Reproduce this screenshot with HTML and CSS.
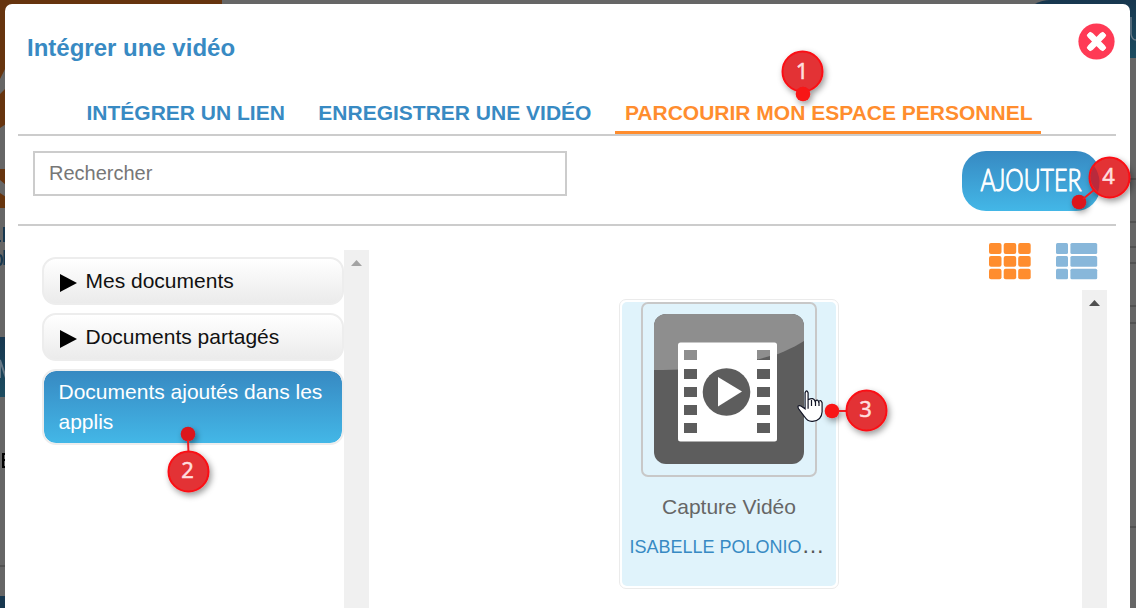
FILE: index.html
```html
<!DOCTYPE html>
<html lang="fr">
<head>
<meta charset="utf-8">
<title>Intégrer une vidéo</title>
<link rel="stylesheet" href="styles.css">
</head>
<body>
<svg class="backdrop" width="1136" height="608" aria-hidden="true">
  <defs><linearGradient id="dim" x1="0" y1="0" x2="0" y2="1"><stop offset="0" stop-color="#17374f"/><stop offset="1" stop-color="#1c4c60"/></linearGradient></defs>
  <rect width="222" height="208" fill="#66340e"/>
  <path d="M0 79L6 67V88L0 94Z M0 128L6 124V169H0Z M0 180L6 185V197L0 193Z" fill="#666"/>
  <path d="M1035 4 Q1042 0 1050 0 H1136 V58 H1120Z" fill="url(#dim)"/>
  <path d="M1131 17 V34 Q1132 40 1136 40" stroke="#667886" stroke-width="1.5" fill="none"/>
  <path d="M1130 179H1136M1130 222H1136M1130 247H1136M1130 263H1136M1130 306H1136M1130 323H1136M1130 527H1136M0 566H5" stroke="#525252" stroke-width="2"/>
  <rect y="337" width="5" height="60" fill="url(#dim)"/>
  <path d="M0 378V360L6 378" stroke="#667886" stroke-width="2" fill="none"/>
  <rect y="596" width="5" height="12" fill="#17374f"/>
  <path d="M0 241H1M4 227V242M0 255Q2 256 2 260T0 265M4.500 250V265" stroke="#17374f" stroke-width="2" fill="none"/>
  <path d="M3 453V468M2 454H5M2 460H5M2 467H5" stroke="#000" stroke-width="2" fill="none"/>
</svg>
<main class="modal">
  <header class="head">
    <h1 class="title">Intégrer une vidéo</h1>
    <svg class="close" width="37" height="37" viewBox="0 0 37 37"><circle cx="18.5" cy="18.5" r="18.1" fill="#ff3a55"/><path d="M12.600 12.600L24.400 24.400M24.400 12.600L12.600 24.400" stroke="#fff" stroke-width="6.400" stroke-linecap="round"/><path d="M12.200 12.200L24.800 24.800M24.800 12.200L12.200 24.800" stroke="#fff" stroke-width="5" stroke-linecap="square"/></svg>
  </header>
  <nav class="tabs">
    <a class="tab">INTÉGRER UN LIEN</a>
    <a class="tab">ENREGISTRER UNE VIDÉO</a>
    <a class="tab active">PARCOURIR MON ESPACE PERSONNEL</a>
  </nav>
  <section class="toolbar">
    <input class="search" placeholder="Rechercher">
    <button class="add"><svg width="138" height="60" viewBox="0 0 138 60"><text class="add-text" x="18.500" y="40" textLength="101" lengthAdjust="spacingAndGlyphs">AJOUTER</text></svg></button>
  </section>
  <section class="content">
    <aside class="side">
      <ul class="folders">
        <li class="folder"><svg class="arrow" width="17" height="18"><path d="M0 0L17 9L0 18Z"/></svg>Mes documents</li>
        <li class="folder"><svg class="arrow" width="17" height="18"><path d="M0 0L17 9L0 18Z"/></svg>Documents partagés</li>
        <li class="folder selected">Documents ajoutés dans les applis</li>
      </ul>
      <div class="scroll"><svg width="11" height="6"><path d="M0 6L5.5 0L11 6Z" fill="#a3a3a3"/></svg></div>
    </aside>
    <div class="browser">
      <div class="views">
        <svg width="42" height="37" viewBox="0 0 42 37" fill="#ff8d2e">
          <rect width="12.500" height="11" rx="2"/><rect x="14.700" width="12.500" height="11" rx="2"/><rect x="29.200" width="12.500" height="11" rx="2"/>
          <rect y="13" width="12.500" height="10.700" rx="2"/><rect x="14.700" y="13" width="12.500" height="10.700" rx="2"/><rect x="29.200" y="13" width="12.500" height="10.700" rx="2"/>
          <rect y="25.800" width="12.500" height="10.400" rx="2"/><rect x="14.700" y="25.800" width="12.500" height="10.400" rx="2"/><rect x="29.200" y="25.800" width="12.500" height="10.400" rx="2"/>
        </svg>
        <svg width="42" height="37" viewBox="0 0 42 37" fill="#88b7da">
          <rect width="12" height="11" rx="1.5"/><rect x="14.400" width="26.800" height="11" rx="1.5"/>
          <rect y="13" width="12" height="10.700" rx="1.5"/><rect x="14.400" y="13" width="26.800" height="10.700" rx="1.5"/>
          <rect y="25.800" width="12" height="10.400" rx="1.5"/><rect x="14.400" y="25.800" width="26.800" height="10.400" rx="1.5"/>
        </svg>
      </div>
      <div class="files">
        <article class="card">
          <div class="card-fill">
            <div class="thumb">
              <svg width="150" height="150" viewBox="0 0 150 150">
                <defs><clipPath id="tile"><rect width="150" height="150" rx="12"/></clipPath></defs>
                <g clip-path="url(#tile)">
                  <rect width="150" height="150" fill="#5d5d5d"/>
                  <path d="M0 0H150V27C118 47 76 56 0 56Z" fill="#8e8e8e"/>
                </g>
                <rect x="24" y="28.5" width="99" height="99" rx="2.5" fill="#fff"/>
                <g fill="#5d5d5d">
                  <rect x="30" y="55" width="13" height="10"/><rect x="30" y="73" width="13" height="10"/><rect x="30" y="91" width="13" height="10"/><rect x="30" y="109" width="13" height="10"/>
                  <rect x="103" y="36" width="13" height="10"/><rect x="103" y="55" width="13" height="10"/><rect x="103" y="73" width="13" height="10"/><rect x="103" y="91" width="13" height="10"/><rect x="103" y="109" width="13" height="10"/>
                  <circle cx="72.5" cy="78" r="23.8"/>
                </g>
                <path d="M30 36H43V46H30Z M103 36H116V42L104 45.5L103 45Z" fill="#8e8e8e"/>
                <path d="M64 63L88 77.5L64 92.5Z" fill="#fff"/>
              </svg>
            </div>
            <div class="name">Capture Vidéo</div>
            <div class="owner"><span class="owner-name">ISABELLE POLONIO</span><span class="more">…</span></div>
          </div>
        </article>
      </div>
    </div>
    <div class="scroll right"><svg width="11" height="6"><path d="M0 6L5.5 0L11 6Z" fill="#505050"/></svg></div>
  </section>
</main>
<svg class="notes" width="1136" height="608">
  <defs>
    <filter id="shadow" x="-50%" y="-50%" width="200%" height="200%"><feDropShadow dx="2" dy="3" stdDeviation="3" flood-color="#000" flood-opacity=".4"/></filter>
  </defs>
  <g filter="url(#shadow)">
    <circle class="disc" cx="802.5" cy="71.5" r="20"/><circle class="dot" cx="803" cy="94" r="7.3"/>
    <circle class="dot dark" cx="188" cy="434" r="7.3"/><path class="link" d="M188 440L188.5 453"/><circle class="disc" cx="188.5" cy="471.500" r="20"/>
    <circle class="dot" cx="832" cy="411" r="7.3"/><path class="link" d="M838 411H846"/><circle class="disc" cx="866.5" cy="410.500" r="20"/>
    <circle class="dot dark" cx="1079" cy="202" r="7.3"/><path class="link dark" d="M1083 199L1094 190"/><circle class="disc" cx="1109.500" cy="177.500" r="20"/>
  </g>
  <path d="M1094 166Q1099 173 1099.500 181Q1099.500 187 1098 192A19 19 0 0 1 1094 166Z" fill="#b92a3c"/>
  <g class="numbers"><text x="802" y="78.500">1</text><text x="187.500" y="478">2</text><text x="865.500" y="417">3</text><text x="1108.500" y="184">4</text></g>
  <path d="M807.500 409V393Q806 389 804.500 393V409L800 406Q796 405 798 409L804 417Q807 422 812 421.500Q821 421 821.500 412V403Q820 399 818 402Q817 399 814.500 401.500Q813 397 807.500 400Z" transform="translate(.6 -.2)" fill="#fff" stroke="#111425" stroke-width="1.200"/>
  <path d="M811.500 400V406M815.500 401V406M819 402V406" stroke="#111425" stroke-width="1.200"/>
</svg>
</body>
</html>
```
FILE: styles.css
```css
* { box-sizing: border-box; }
body {
  margin: 0;
  height: 608px;
  overflow: hidden;
  padding: 4px 6px 0 5px;
  background: #666;
  font-family: "Liberation Sans", Arial, sans-serif;
}
.backdrop, .notes { position: absolute; left: 0; top: 0; pointer-events: none; }
.modal {
  position: relative;
  height: 604px;
  padding: 0 14px 0 13px;
  background: #fff;
  border-radius: 7px 7px 0 0;
  display: flex;
  flex-direction: column;
}
.head {
  height: 86px;
  padding: 19px 1px 0 9px;
  display: flex;
  justify-content: space-between;
  align-items: flex-start;
}
.title { margin: 10px 0 0; font-size: 24px; line-height: 30px; color: #388ac3; }
.close { flex: none; }
.tabs {
  height: 46px;
  padding-left: 59px;
  display: flex;
  gap: 15px;
  border-bottom: 2px solid #ccc;
}
.tab {
  height: 44px;
  padding: 4px 9px 0 9.500px;
  font-size: 21px;
  line-height: 38px;
  font-weight: bold;
  color: #388ac3;
  white-space: nowrap;
}
.tab.active { color: #ff8d2e; border-bottom: 3px solid #ff8d2e; }
.toolbar {
  height: 90px;
  padding: 15px 16px 0 15px;
  display: flex;
  justify-content: space-between;
  align-items: flex-start;
  border-bottom: 2px solid #ccc;
}
.search {
  width: 534px;
  height: 45px;
  padding: 0 14px;
  border: 2px solid #ccc;
  font: 20px "Liberation Sans", Arial, sans-serif;
}
.search::placeholder { color: #777; }
.add {
  width: 138px;
  height: 60px;
  padding: 0;
  border: 0;
  border-radius: 24px;
  background: linear-gradient(#3789c2, #43b7e7);
}
.add svg { display: block; }
.add-text { font: 300 31px Lato, "Open Sans", sans-serif; fill: #fff; stroke: #fff; stroke-width: 1.100px; stroke-linejoin: round; }
.content { flex: 1; display: flex; min-height: 0; }
.side { width: 351px; flex: none; padding: 24px 0 0 24px; display: flex; }
.folders { width: 302px; margin: 0; padding: 7px 0 0; list-style: none; }
.folder {
  height: 48px;
  margin-bottom: 8px;
  padding: 0 12px 0 16px;
  display: flex;
  align-items: center;
  gap: 8.500px;
  border: 2px solid #ededed;
  border-radius: 14px;
  background: linear-gradient(#fff, #ebebeb);
  font-size: 21px;
  color: #111;
}
.arrow { margin-top: 3px; fill: #000; }
.folder.selected {
  display: block;
  height: 76px;
  padding: 6px 10px 6px 14.500px;
  background: linear-gradient(#3789c2, #43b7e7) padding-box;
  color: #fff;
  line-height: 30px;
}
.scroll {
  flex: none;
  width: 25px;
  padding-top: 10px;
  background: #f0f0f0;
  display: flex;
  justify-content: center;
}
.scroll svg { display: block; }
.scroll.right { margin: 64px 9px 0 0; }
.browser { flex: 1; min-width: 0; }
.views {
  height: 73px;
  margin-right: -16px;
  padding-top: 17px;
  display: flex;
  justify-content: flex-end;
  gap: 25px;
}
.views svg { flex: none; }
.files { padding-left: 250px; }
.card {
  width: 220px;
  height: 290px;
  padding: 2px;
  border: 1px solid #ebebeb;
  border-radius: 7px;
}
.card-fill {
  height: 284px;
  background: #e0f3fb;
  border-radius: 5px;
  display: flex;
  flex-direction: column;
  align-items: center;
}
.thumb {
  width: 176px;
  height: 175px;
  padding: 10px 11px;
  border: 2px solid #c8c8c8;
  border-radius: 7px;
}
.name { margin-top: 18px; font-size: 21px; line-height: 24px; color: #666; }
.owner {
  align-self: flex-start;
  margin: 17px 0 0 7.500px;
  font-size: 18px;
  line-height: 22px;
  color: #555;
  white-space: nowrap;
}
.owner-name { color: #388ac3; }
.more { font-size: 23px; line-height: 18px; }
.dot { fill: #f81318; }
.dot.dark { fill: #dc151d; }
.disc { fill: #e33235; stroke: #fb1013; stroke-width: 2px; }
.link { stroke: #f01c20; stroke-width: 2px; }
.numbers { font: 400 22px "Noto Sans", sans-serif; fill: #ffdede; stroke: #ffdede; stroke-width: .5px; text-anchor: middle; }
```
